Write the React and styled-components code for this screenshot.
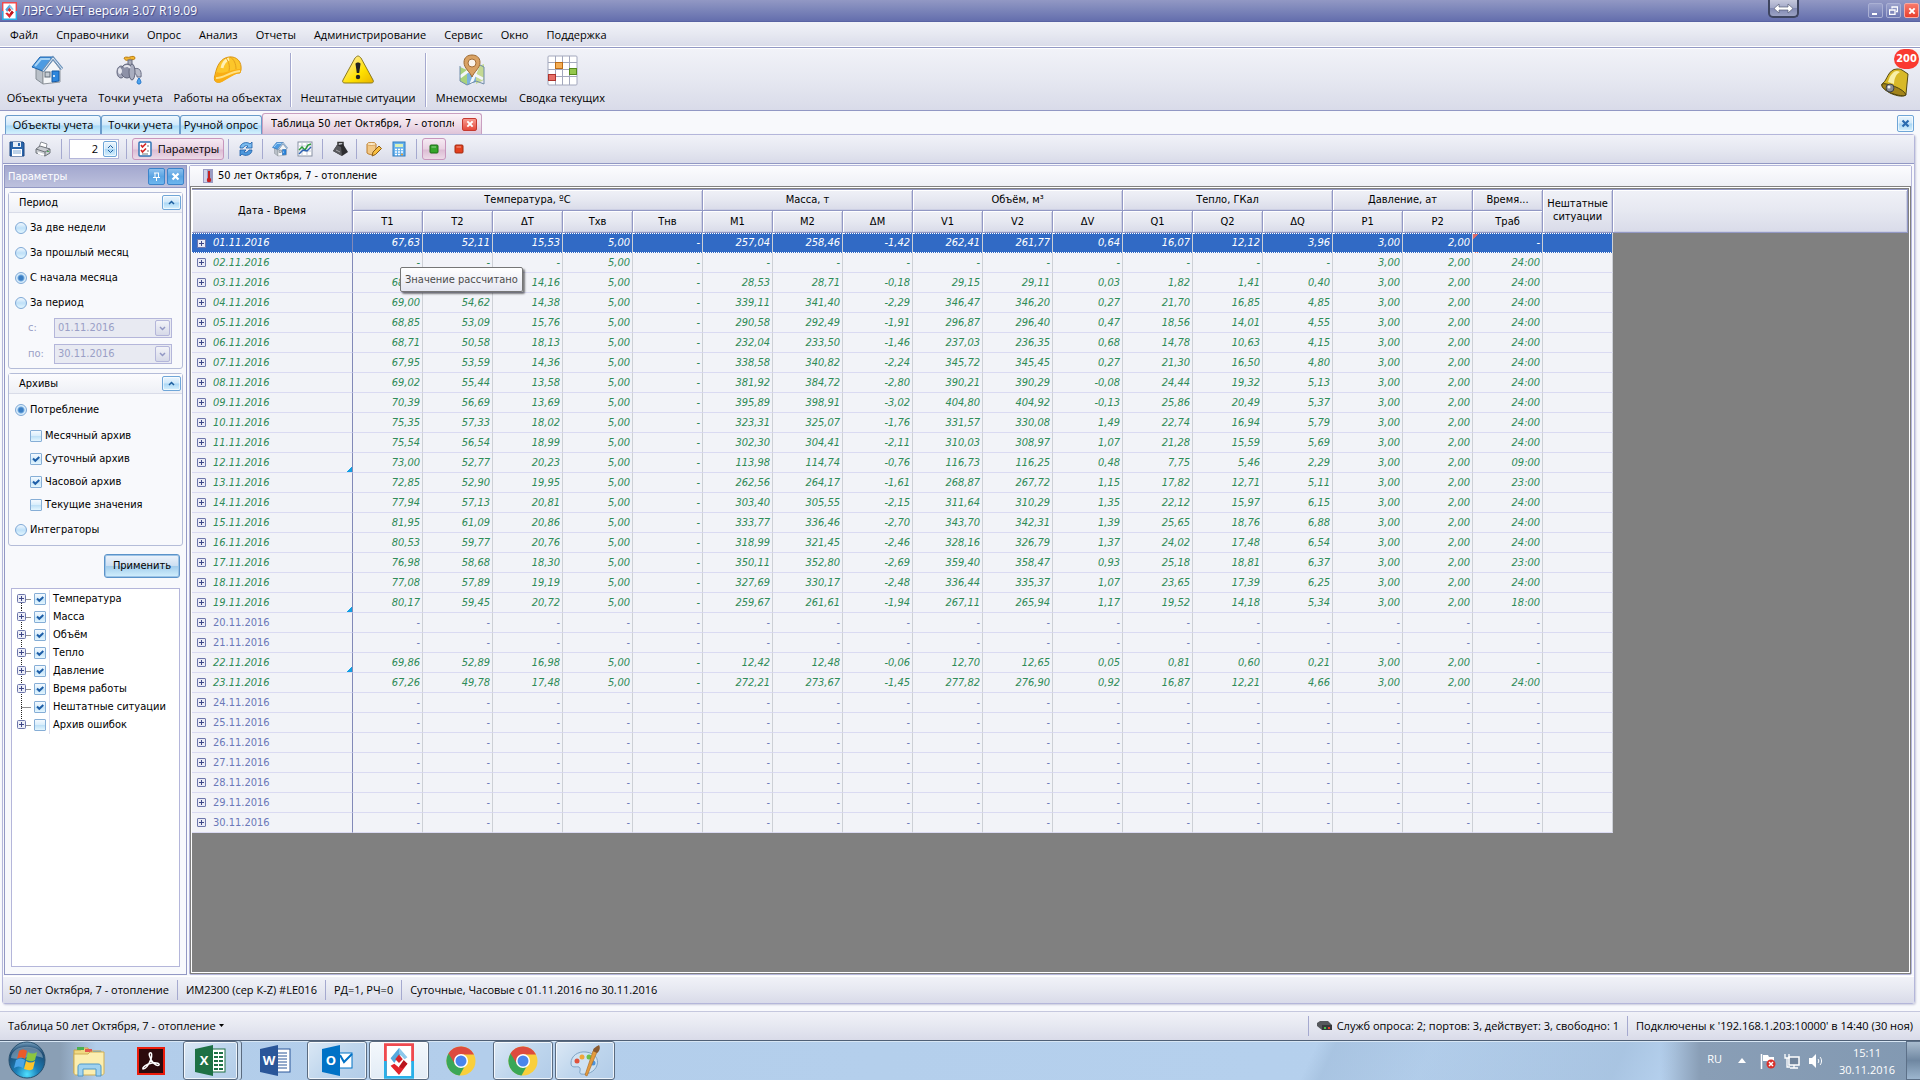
import React from "react";
import styled, { createGlobalStyle, css } from "styled-components";

const GlobalStyle = createGlobalStyle`
  * {
    box-sizing: border-box;
  }

  body {
    margin: 0;
    background: #f8f9fc;
    color: #000;
    font-family: "Open Sans", "Noto Sans", sans-serif;
    font-size: 11px;
    line-height: 16px;
  }

  button,
  input,
  select {
    font: inherit;
    color: inherit;
    margin: 0;
  }
`;

const smallFont = css`
  font-family: "DejaVu Sans Condensed", "Noto Sans", sans-serif;
  font-size: 11px;
  line-height: 14px;
`;

const barFill = css`
  background: linear-gradient(#f1f2f8, #e6e8f1 50%, #d9dbe9);
`;

const blueGlass = css`
  border: 1px solid #6fa6d8;
  border-radius: 2px;
  background: linear-gradient(#eaf5fd, #cfe8fa 48%, #a9d6f5 52%, #d8f1fd);
  box-shadow: inset 0 0 0 1px rgba(255, 255, 255, 0.6);
`;

const Window = styled.div`
  display: flex;
  flex-direction: column;
  min-height: 100vh;
`;

const TitleBar = styled.header`
  display: flex;
  align-items: center;
  height: 22px;
  padding: 0 1px 0 2px;
  gap: 5px;
  background: linear-gradient(#9298c4, #7f88bb 40%, #646ead);
  border-bottom: 1px solid #5963a3;
  color: #fff;
  text-shadow: 1px 1px 1px #3d4684;
`;

const Title = styled.h1`
  flex: 1;
  margin: 0;
  font-size: 12px;
  font-weight: 400;
`;

const ResizeButton = styled.button`
  width: 31px;
  height: 18px;
  align-self: flex-start;
  display: grid;
  place-items: center;
  margin-right: 64px;
  padding: 0;
  border: 2px solid #3e4560;
  border-top: none;
  border-radius: 0 0 5px 5px;
  background: linear-gradient(#c5c8dc, #a2a8c8 50%, #8189b2 50%, #9ba2c4);
`;

const CaptionButton = styled.button`
  width: 15px;
  height: 15px;
  display: grid;
  place-items: center;
  padding: 0;
  border: 1px solid ${(p) => (p.$red ? "#f7a9a2" : "#aab0d4")};
  border-radius: 2px;
  background: ${(p) =>
    p.$red
      ? "linear-gradient(#f8796b, #e8402f)"
      : "linear-gradient(#9ba2cb, #6f79b3)"};
`;

const CaptionButtons = styled.div`
  display: flex;
  gap: 3px;
`;

const MenuBar = styled.nav`
  display: flex;
  align-items: center;
  height: 26px;
  padding-left: 1px;
  ${barFill}
  border-bottom: 1px solid #9298c4;
  box-shadow: inset 0 -1px 0 #fff;
`;

const MenuItem = styled.button`
  padding: 0 9px;
  border: none;
  background: none;
`;

const MainToolbar = styled.div`
  display: flex;
  align-items: stretch;
  height: 63px;
  padding: 4px 10px 3px 2px;
  ${barFill}
  border-top: 1px solid #fff;
  border-bottom: 1px solid #9298c4;
`;

const BigButton = styled.button`
  display: flex;
  flex-direction: column;
  align-items: center;
  justify-content: space-between;
  width: ${(p) => p.$width}px;
  padding: 1px 0 1px;
  border: none;
  background: none;
  white-space: nowrap;
`;

const Separator = styled.span`
  width: 1px;
  margin: 0 4px;
  background: #a5a9cf;
  box-shadow: 1px 0 0 #fff;
`;

const Spacer = styled.span`
  flex: 1;
`;

const BellButton = styled.button`
  position: relative;
  width: 30px;
  height: 30px;
  margin-top: 14px;
  padding: 0;
  border: none;
  background: none;
`;

const Badge = styled.span`
  position: absolute;
  right: -9px;
  top: -18px;
  width: 25px;
  height: 20px;
  border-radius: 10px;
  background: #fa3a30;
  color: #fff;
  font-family: "DejaVu Sans Condensed", sans-serif;
  font-weight: 700;
  font-size: 11px;
  line-height: 20px;
  text-align: center;
`;

const TabStrip = styled.div`
  display: flex;
  align-items: flex-end;
  height: 23px;
  padding: 0 6px 0 5px;
`;

const Tab = styled.button`
  height: 19px;
  width: ${(p) => p.$width}px;
  padding: 0;
  border: 1px solid #6a9ccb;
  border-bottom: none;
  border-radius: 3px 3px 0 0;
  background: linear-gradient(#f0f8fe, #cfe8fa 50%, #a8d8f6 55%, #d5f2fd);
  white-space: nowrap;
  line-height: 16px;
`;

const ActiveTab = styled.div`
  display: flex;
  align-items: center;
  gap: 8px;
  width: 220px;
  height: 21px;
  padding: 0 4px 0 8px;
  border: 1px solid #c99fc0;
  border-bottom: none;
  border-radius: 3px 3px 0 0;
  background: linear-gradient(#faf3f8, #efdfea 50%, #dfc3d8);
`;

const ActiveTabLabel = styled.span`
  ${smallFont}
  flex: 1;
  overflow: hidden;
  white-space: nowrap;
`;

const CloseTab = styled.button`
  width: 15px;
  height: 13px;
  display: grid;
  place-items: center;
  padding: 0;
  border: 1px solid #c5392f;
  border-radius: 2px;
  background: linear-gradient(#f79a90, #e5493b);
`;

const GlassButton = styled.button`
  ${blueGlass}
  display: grid;
  place-items: center;
  width: ${(p) => p.$w || 17}px;
  height: ${(p) => p.$h || 17}px;
  padding: 0;
`;

const StripClose = styled(GlassButton)`
  margin-bottom: 2px;
`;

const PageFrame = styled.main`
  flex: 1;
  display: flex;
  flex-direction: column;
  margin: 0 5px 7px 2px;
  border: 1px solid #b4b6da;
  border-radius: 0 3px 3px 3px;
  box-shadow: 1px 1px 2px #c9cbdc;
`;

const ToolRow = styled.div`
  display: flex;
  align-items: center;
  height: 29px;
  padding: 0 5px;
  ${barFill}
  border-bottom: 1px solid #9298c4;
`;

const ToolButton = styled.button`
  display: flex;
  align-items: center;
  justify-content: center;
  gap: 5px;
  width: ${(p) => p.$width || 26}px;
  height: 22px;
  padding: 0;
  border: 1px solid ${(p) => (p.$on ? "#c796bd" : "transparent")};
  border-radius: 3px;
  background: ${(p) =>
    p.$on ? "linear-gradient(#f6eaf3, #e9d2e3 50%, #dcbcd4 55%, #ecdae7)" : "none"};
`;

const ToolSeparator = styled.span`
  width: 1px;
  height: 20px;
  margin: 0 ${(p) => p.$right || 5}px 0 ${(p) => p.$left || 4}px;
  background: #a5a9cf;
`;

const Spinner = styled.label`
  display: flex;
  align-items: center;
  width: 50px;
  height: 20px;
  padding: 1px;
  border: 1px solid #b4b6da;
  background: #fff;
`;

const SpinnerInput = styled.input`
  flex: 1;
  width: 10px;
  padding: 0 5px 0 0;
  border: none;
  outline: none;
  background: none;
  text-align: right;
`;

const Workspace = styled.div`
  flex: 1;
  display: flex;
  gap: 2px;
  padding: 1px 2px 1px 1px;
`;

const SidePanel = styled.aside`
  ${smallFont}
  display: flex;
  flex-direction: column;
  width: 183px;
  border: 1px solid #9298c4;
`;

const SideHeader = styled.div`
  display: flex;
  align-items: center;
  gap: 2px;
  height: 22px;
  padding: 0 2px 0 3px;
  background: linear-gradient(#a3a8cf, #bdc1dd);
  border-bottom: 1px solid #9298c4;
  color: #fff;
`;

const SideTitle = styled.h2`
  flex: 1;
  margin: 0;
  font-size: 11px;
  font-weight: 400;
`;

const HeaderButton = styled.button`
  width: 17px;
  height: 17px;
  display: grid;
  place-items: center;
  padding: 0;
  border: 1px solid #3c84ca;
  border-radius: 2px;
  background: linear-gradient(#8cc0ee, #5ba4e2 50%, #6db6ee);
`;

const SideBody = styled.div`
  flex: 1;
  display: flex;
  flex-direction: column;
  padding: 4px 3px 7px;
`;

const Group = styled.section`
  margin-bottom: 4px;
  border: 1px solid #b4bcd8;
  border-radius: 3px;
  background: #f8f9fc;
`;

const GroupHeader = styled.div`
  display: flex;
  align-items: center;
  justify-content: space-between;
  height: 20px;
  padding: 0 1px 0 10px;
  background: linear-gradient(#fcfcfe, #eef0f6);
  border-bottom: 1px solid #d9dce8;
`;

const GroupTitle = styled.h3`
  margin: 0;
  font-size: 11px;
  font-weight: 400;
`;

const Option = styled.label`
  display: flex;
  align-items: center;
  gap: 3px;
  height: ${(p) => p.$height || 25}px;
  padding-left: ${(p) => (p.$nested ? 21 : 6)}px;
  white-space: nowrap;
`;

const PeriodOptions = styled.div`
  padding: 2px 0 1px;
`;

const ArchiveOptions = styled.div`
  padding: 2px 0 1px;
`;

const Radio = styled.input.attrs({ type: "radio" })`
  appearance: none;
  width: 12px;
  height: 12px;
  border: 1px solid #7fa9d6;
  border-radius: 50%;
  background: linear-gradient(#f1f8fe, #bfe0f8 50%, #e2f6fe);

  &:checked {
    background: radial-gradient(#3c7fc4 0 2px, #72a9de 3px, #d9edfb 4px);
  }
`;

const checkMark =
  "url(\"data:image/svg+xml,%3Csvg xmlns='http://www.w3.org/2000/svg' width='10' height='10'%3E%3Cpath d='M2 4.5l2.3 2.3L8.3 3' fill='none' stroke='%231f5fa8' stroke-width='2'/%3E%3C/svg%3E\")";

const Checkbox = styled.input.attrs({ type: "checkbox" })`
  appearance: none;
  width: 12px;
  height: 12px;
  border: 1px solid #86aed6;
  border-radius: 1px;
  background: linear-gradient(#f4faff, #d8edfb 50%, #bfe1f7 55%, #e4f6fe);

  &:checked {
    background: ${checkMark} center no-repeat,
      linear-gradient(#f4faff, #d8edfb 50%, #c9e6f9 55%, #e4f6fe);
  }
`;

const DateRow = styled.label`
  display: grid;
  grid-template-columns: 26px 118px;
  align-items: center;
  padding: 2px 0 4px 19px;
  color: #9a9fc6;
`;

const DateBox = styled.span`
  display: flex;
  align-items: center;
  height: 20px;
  padding: 0 1px 0 3px;
  border: 1px solid #b4b6da;
  background: #e8eaf2;
`;

const DateSelect = styled.select`
  appearance: none;
  flex: 1;
  padding: 0;
  border: none;
  background: none;
  opacity: 1;
`;

const DateArrow = styled.span`
  display: grid;
  place-items: center;
  width: 15px;
  height: 16px;
  border: 1px solid #b4b6da;
  border-radius: 2px;
  background: linear-gradient(#f2f3f8, #d6d9e8);
`;

const ApplyButton = styled.button`
  align-self: flex-end;
  width: 76px;
  height: 24px;
  margin: 4px 3px 10px 0;
  border: 1px solid #5b93c9;
  border-radius: 3px;
  background: linear-gradient(#eef4fb, #cddff2 48%, #a3cdec 52%, #d3f0fd);
  box-shadow: inset 0 0 0 1px #9cc3e6;
`;

const Tree = styled.ul`
  flex: 1;
  margin: 0 3px;
  padding: 1px 0;
  list-style: none;
  border: 1px solid #b4b6da;
  background: #fff;
`;

const TreeItem = styled.li`
  display: flex;
  align-items: center;
  height: 18px;
  padding-left: 4px;
`;

const TreeLines = styled.svg`
  width: 17px;
  height: 18px;
`;

const TreeLabel = styled.label`
  display: flex;
  align-items: center;
  height: 18px;
  padding-left: 1px;
  white-space: nowrap;

  span {
    margin-left: 3px;
    padding-left: 3px;
    border-left: 1px solid #dcdff0;
    line-height: 18px;
  }
`;

const MainPanel = styled.section`
  ${smallFont}
  flex: 1;
  min-width: 0;
  display: flex;
  flex-direction: column;
  border: 1px solid #b4b6da;
  border-radius: 2px;
`;

const PanelCaption = styled.div`
  display: flex;
  align-items: center;
  gap: 5px;
  height: 20px;
  padding: 0 0 1px 13px;
  background: linear-gradient(#fcfcfe, #eef0f6);
`;

const GridBox = styled.div`
  position: relative;
  flex: 1;
  display: flex;
  align-items: flex-start;
  padding: 2px 2px 0 1px;
  border: 1px solid #808080;
  background: #808080;
  box-shadow: inset 0 0 0 1px #fff;
`;

const headerCell = css`
  border: solid #9298c4;
  border-width: 0 1px 1px 0;
  background: linear-gradient(#f0f1f7, #e6e8f1 50%, #d9dbe9);
  box-shadow: inset 1px 1px 0 #fff, inset -1px -1px 0 #cbcee3;
`;

const DataTable = styled.table`
  flex: none;
  width: 1421px;
  table-layout: fixed;
  border-collapse: separate;
  border-spacing: 0;
  border-top: 1px solid #9298c4;
`;

const HeadCell = styled.th`
  ${headerCell}
  height: ${(p) => (p.rowSpan ? 43 : p.$upper ? 21 : 22)}px;
  padding: 0 0 ${(p) => (p.rowSpan || p.$upper ? 2 : 0)}px;
  font-weight: 400;
  line-height: 13px;
`;

const HeaderFiller = styled.div`
  ${headerCell}
  flex: 1;
  height: 44px;
  border-top: 1px solid #9298c4;
`;

const cellColor = { saved: "#2e8b57", empty: "#6a78b8" };

const Row = styled.tr`
  font-style: ${(p) => (p.$kind === "saved" ? "italic" : "normal")};
  color: ${(p) => cellColor[p.$kind]};
  background: #f2f3f8;

  ${(p) =>
    p.$selected &&
    css`
      color: #fff;
      background: #316ac5;
    `}
`;

const Cell = styled.td`
  height: 20px;
  padding: 0 2px 0 0;
  border: solid #cdd0d6;
  border-width: 0 1px 1px 0;
  border-bottom-color: #dadaf2;
  text-align: right;
  line-height: 16px;

  ${(p) =>
    p.$selected &&
    css`
      border-top: 1px dotted #fff;
      border-bottom: 1px dotted #fff;
    `}
  ${(p) =>
    p.$warn &&
    css`
      background: linear-gradient(135deg, #d96b6b 4px, transparent 4px);
    `}
`;

const DateCell = styled(Cell)`
  padding: 0 0 0 5px;
  border-right-color: #8289b8;
  text-align: left;
  background: ${(p) =>
    p.$marked ? "linear-gradient(315deg, #129fe3 4px, transparent 4px)" : "none"};
`;

const DateCellInner = styled.div`
  display: flex;
  align-items: center;
  gap: 7px;
`;

const Expander = styled.button`
  width: 9px;
  height: 9px;
  padding: 0;
  border: 1px solid #6d76ab;
  border-radius: 1px;
  background: linear-gradient(#3d4687, #3d4687) center / 5px 1px no-repeat,
    linear-gradient(#3d4687, #3d4687) center / 1px 5px no-repeat, #e9ebf5;
`;

const Tooltip = styled.div`
  position: absolute;
  left: 209px;
  top: 80px;
  padding: 5px 4px 4px;
  border: 1px solid #767676;
  border-radius: 2px;
  background: linear-gradient(#fff, #e4e5f0);
  box-shadow: 2px 2px 2px rgba(0, 0, 0, 0.5);
  color: #4c4c4c;
`;

const StatusBar = styled.footer`
  display: flex;
  align-items: center;
  height: 27px;
  padding: 0 6px;
  ${barFill}
  border-top: 1px solid #fff;
`;

const WindowStatus = styled(StatusBar)`
  height: 29px;
  padding: 0 7px 1px 8px;
  border-top: 1px solid #c5c8de;
`;

const StatusDivider = styled.span`
  width: 1px;
  height: 20px;
  margin: 0 8px;
  background: #a5a9cf;
`;

const StatusText = styled.span`
  display: flex;
  align-items: center;
  gap: 5px;
  white-space: nowrap;
`;

const WindowMenu = styled.button`
  display: flex;
  align-items: center;
  gap: 3px;
  padding: 0;
  border: none;
  background: none;
`;

const Taskbar = styled.footer`
  display: flex;
  height: 40px;
  border-top: 1px solid #4f6076;
  background: linear-gradient(
      115deg,
      transparent 68%,
      rgba(160, 188, 218, 0.6) 69%,
      rgba(160, 188, 218, 0.2) 74%,
      rgba(160, 188, 218, 0.6) 84%,
      transparent 87%
    ),
    linear-gradient(
      90deg,
      #8a9fb5 0,
      #8a9fb5 60px,
      #b2cdea 96px,
      #b6d1ee calc(100% - 260px),
      #899eb6 calc(100% - 220px),
      #8299b2 100%
    );
  box-shadow: inset 0 1px 0 #d7e6f4;
`;

const StartButton = styled.button`
  width: 58px;
  padding: 0 6px 0 2px;
  border: none;
  background: none;
`;

const TaskButton = styled.button`
  display: grid;
  place-items: center;
  width: 60px;
  margin: 0 1px;
  padding: 0;
  border: 1px solid transparent;
  border-radius: 3px;
  background: none;

  ${(p) =>
    p.$open &&
    css`
      border-color: #5a6b80;
      box-shadow: inset 0 0 0 1px rgba(255, 255, 255, 0.75);
      background: linear-gradient(135deg, #dbe8f5, #bfd6ed 50%, #b2cce8);
    `}
  ${(p) =>
    p.$active &&
    css`
      background: linear-gradient(#f4f8fc, #e2ecf6);
    `}
  ${(p) =>
    p.$stacked &&
    css`
      width: 55px;
      margin-right: 6px;
      box-shadow: inset 0 0 0 1px rgba(255, 255, 255, 0.75), 3px 0 0 #c6d9ec,
        4px 0 0 #5a6b80;
    `}
`;

const Tray = styled.div`
  display: flex;
  align-items: center;
  color: #fff;
`;

const TrayIcons = styled.div`
  display: flex;
  align-items: center;
  gap: 8px;
  padding-right: 4px;
`;

const Clock = styled.time`
  width: 78px;
  text-align: center;
  line-height: 17px;
`;

const Language = styled.span`
  margin: 0 16px 4px 0;
`;

const ShowDesktop = styled.button`
  width: 14px;
  align-self: stretch;
  border: 1px solid #5c7088;
  border-right: none;
  background: linear-gradient(#a9bccf, #6f87a1 50%, #9db6cf);
`;

/* ---------- icons ---------- */

function Svg({ size = 16, w, h, children }) {
  return (
    <svg width={w || size} height={h || size} viewBox={`0 0 ${w || size} ${h || size}`} aria-hidden="true">
      {children}
    </svg>
  );
}

function LersIcon({ size = 16 }) {
  return (
    <svg width={size} height={size * 1.2} viewBox="0 0 32 38" aria-hidden="true">
      <rect x="1" y="1" width="30" height="36" fill="#fff" />
      <path d="M1.500 37V1.500H30.500V20" fill="none" stroke="#ef4a4f" strokeWidth="3" />
      <path d="M1.500 19V36.500H30.500V19" fill="none" stroke="#2ab0e8" strokeWidth="3" />
      <path d="M7 16L16 5L22 12L16 13L11 21Z" fill="#56a9de" />
      <path d="M16 5L25 15L22 17L16 11Z" fill="#8ec9ec" />
      <path d="M16 12L20 17L16 21L12 17Z" fill="#d8232a" />
      <path d="M25 22L16 34L7 24L11 22L16 26L21 19Z" fill="#e2242c" />
      <path d="M21 18L25 22L20 27L16 25Z" fill="#b9151d" />
    </svg>
  );
}

function HouseIcon({ size = 32 }) {
  return (
    <svg width={size} height={size} viewBox="0 0 32 32" aria-hidden="true">
      <path d="M5 14L12 18V30L5 25Z" fill="#b9c0c8" stroke="#858c94" />
      <path d="M12 18L22 6L29 15V28L12 30Z" fill="#f4f6f8" stroke="#8e949b" />
      <path d="M1 13L9 3L22 3L12 17Z" fill="#4c9be2" stroke="#1c63ad" />
      <path d="M4 12L10 5H19" fill="none" stroke="#a6d2f5" strokeWidth="2" />
      <path d="M12 17L22 4L31 15" fill="none" stroke="#6c93bb" strokeWidth="3" />
      <path d="M12 17L22 4L31 15" fill="none" stroke="#e6eef6" />
      <rect x="14" y="18" width="5" height="5" fill="#c5ccd3" stroke="#5f6b77" />
      <path d="M21 17H28V27L21 28Z" fill="#2d86dd" stroke="#1559a3" />
      <circle cx="23" cy="22" r="1" fill="#fff" />
    </svg>
  );
}

function TapIcon() {
  return (
    <Svg size={32}>
      <path d="M9 4C11 2 13 4 15 3C17 2 20 2 20 4C20 6 17 6 15 5C13 7 10 7 9 4Z" fill="#f2b632" stroke="#bb7d12" />
      <rect x="13" y="6" width="4" height="6" fill="#a9acba" stroke="#6c7086" />
      <path d="M18 15C24 13 27 16 26 23H22C22 20 20 19 17 20Z" fill="#b8bac8" stroke="#6c7086" />
      <ellipse cx="6" cy="18" rx="4" ry="6" fill="#a4a8bb" stroke="#62667c" />
      <ellipse cx="12" cy="17" rx="6" ry="7" fill="#8d91a7" stroke="#62667c" />
      <ellipse cx="17" cy="18" rx="3" ry="8" fill="#a9adbf" stroke="#62667c" />
      <ellipse cx="5" cy="17" rx="2" ry="3" fill="#e5e6ee" />
      <path d="M9 13C12 11 14 12 15 14" fill="none" stroke="#e4e5ed" strokeWidth="2" />
      <path d="M24 24C27 28 26 30 24 30C22 30 21 28 24 24Z" fill="#4da4ef" stroke="#1b6fc6" />
    </Svg>
  );
}

function HelmetIcon() {
  return (
    <Svg size={32}>
      <path d="M3 21C5 11 9 4 17 3C25 2 30 8 29 16L28 19C20 19 15 25 8 28C4 29 1 27 3 21Z" fill="#fcc62a" stroke="#dc9512" />
      <path d="M5 18C11 21 20 15 28 15L29 18C23 20 17 24 10 28C5 30 1 27 3 22Z" fill="#f9ae14" />
      <path d="M4 24C11 25 17 18 28 17" fill="none" stroke="#ffe286" strokeWidth="2" />
      <path d="M10 14C11 9 14 6 17 5" fill="none" stroke="#fff0b4" strokeWidth="3" />
      <path d="M18 3C22 5 24 10 24 15M14 4C17 8 18 12 17 17" fill="none" stroke="#e3a01c" />
    </Svg>
  );
}

function WarningIcon() {
  return (
    <Svg size={32}>
      <defs>
        <linearGradient id="warn" x2="1" y2="1">
          <stop offset="0.200" stopColor="#ffe98a" />
          <stop offset="0.600" stopColor="#ffe100" />
          <stop offset="1" stopColor="#e9b400" />
        </linearGradient>
      </defs>
      <path d="M16 2C17 2 18 3 19 4L31 26C32 28 31 29 29 29H3C1 29 0 28 1 26L13 4C14 3 15 2 16 2Z" fill="url(#warn)" stroke="#8c7a1d" />
      <path d="M13.500 10C13.500 8 18.500 8 18.500 10L17.200 19H14.800Z" fill="#222" />
      <circle cx="16" cy="23" r="2.200" fill="#222" />
    </Svg>
  );
}

function MapIcon() {
  return (
    <Svg size={32}>
      <path d="M4 13L11 16V31L4 27Z" fill="#a9d27c" />
      <path d="M11 16L20 13V28L11 31Z" fill="#7db3dd" />
      <path d="M20 13L28 10V26L20 30Z" fill="#c4d993" />
      <path d="M4 23L12 17L27 25M22 12L15 30" fill="none" stroke="#f3f6fa" strokeWidth="3" />
      <path d="M4 12V27L11 31L20 27L28 30V13L24 11" fill="none" stroke="#718ca8" />
      <path d="M16 23C14 18 8 14 8 8.500C8 3 12 1 16 1C20 1 24 3 24 8.500C24 14 18 18 16 23Z" fill="#d9a264" stroke="#9c6932" />
      <circle cx="16" cy="9" r="4" fill="#faf4ec" stroke="#a36e37" />
    </Svg>
  );
}

function SummaryIcon() {
  return (
    <Svg size={32}>
      <rect x="2" y="2" width="29" height="29" rx="1" fill="#fff" stroke="#a3a8bd" />
      <path d="M2 8.500H31M2 15.500H31M2 22.500H31M9.500 2V31M16.500 2V31M23.500 2V31" stroke="#a3a8bd" />
      <rect x="9.500" y="8.500" width="7" height="6" fill="#f4ad54" stroke="#bc6c16" />
      <rect x="23.500" y="14.500" width="7" height="6" fill="#94c74c" stroke="#568b1d" />
      <rect x="2.500" y="20.500" width="7" height="6" fill="#e66f68" stroke="#ad332d" />
    </Svg>
  );
}

function BellIcon() {
  return (
    <Svg size={30}>
      <path d="M22 3L28 7L26 27C26 30 18 30 10 26C3 22 0 18 3 16C7 14 8 2 17 2C19 2 20 2 22 3Z" fill="#d8b928" stroke="#574b12" />
      <path d="M2 17C5 15 25 22 26 28C22 31 0 24 2 17Z" fill="#a3841a" stroke="#4d420f" />
      <path d="M12 7C9 10 9 13 8 15L14 17C14 12 16 7 20 5C17 3 14 4 12 7Z" fill="#f8f0a8" />
      <circle cx="10" cy="21" r="4" fill="#8a8e94" stroke="#3f4247" />
      <circle cx="9" cy="20" r="1.500" fill="#f3f3f3" />
    </Svg>
  );
}

function Cross({ color = "#fff", size = 9 }) {
  return (
    <svg width={size} height={size} viewBox="0 0 9 9" aria-hidden="true">
      <path d="M1.500 1.500L7.500 7.500M7.500 1.500L1.500 7.500" stroke={color} strokeWidth="2.200" />
    </svg>
  );
}

const SaveIcon = () => (
  <Svg>
    <path d="M1 1H14L15 2V15H1Z" fill="#2a66ab" stroke="#1a4580" />
    <rect x="4" y="1" width="8" height="5" fill="#e8f0f8" />
    <rect x="9" y="2" width="2" height="3" fill="#2a66ab" />
    <rect x="3" y="8" width="10" height="7" fill="#fff" />
    <path d="M4 10H12M4 12H12" stroke="#7aa5d2" />
  </Svg>
);

const PrinterIcon = () => (
  <Svg>
    <path d="M4 6L6 1L12 3L11 8Z" fill="#fff" stroke="#8b8f96" />
    <path d="M1 8L5 5L15 8V12L10 15L1 12Z" fill="#c9ccd1" stroke="#6f747b" />
    <path d="M1 8L10 11V15M10 11L15 8" fill="none" stroke="#6f747b" />
    <path d="M3 12L9 14" stroke="#fff" strokeWidth="2" />
    <rect x="12" y="10" width="2" height="1" fill="#4bb052" />
  </Svg>
);

const ListIcon = () => (
  <Svg>
    <rect x="2" y="1" width="12" height="14" rx="1" fill="#fff" stroke="#3274b5" strokeWidth="1.500" />
    <path d="M4 4L5.500 6L9 2.500M4 9L5.500 11L9 7.500" fill="none" stroke="#d42626" strokeWidth="1.700" />
    <path d="M10 5H12M10 10H12M5 13H11" stroke="#777" />
  </Svg>
);

const RefreshIcon = () => (
  <Svg>
    <path d="M2 7C2 2 9 0 12 3L14 1V7H8L10 5C8 4 6 5 5 7Z" fill="#7bbcf0" stroke="#1c5ea8" strokeWidth="0.800" />
    <path d="M14 9C14 14 7 16 4 13L2 15V9H8L6 11C8 12 10 11 11 9Z" fill="#4d98dc" stroke="#1c5ea8" strokeWidth="0.800" />
  </Svg>
);

const ChartIcon = () => (
  <Svg>
    <rect x="1" y="1" width="14" height="14" fill="#fff" stroke="#8791a3" />
    <path d="M1 5H15M1 10H15M5 1V15M10 1V15" stroke="#c5cbd8" />
    <path d="M2 9L5 6L8 9L11 4L14 3" fill="none" stroke="#2c9a3a" strokeWidth="1.500" />
    <path d="M2 13L6 9L10 10L14 6" fill="none" stroke="#2d62b3" strokeWidth="1.500" />
  </Svg>
);

const WeightIcon = () => (
  <Svg>
    <path d="M6 5V1.500H11V5" fill="none" stroke="#333" strokeWidth="1.500" />
    <path d="M5 4L11 3L16 11L10 15L1 10Z" fill="#2d2d30" />
    <path d="M5 4L9 6L10 15L1 10Z" fill="#58595d" />
    <path d="M4 9L8 11" stroke="#a7a7aa" />
  </Svg>
);

const EditIcon = () => (
  <Svg>
    <path d="M1 3C3 1 8 1 10 3V12C8 14 3 14 1 12Z" fill="#f2c886" stroke="#bd7d2b" />
    <ellipse cx="5.500" cy="3" rx="4.500" ry="1.500" fill="#fdebc8" stroke="#bd7d2b" strokeWidth="0.600" />
    <path d="M6 15L7 11L13 5L15.500 7.500L9.500 13.500Z" fill="#f8be3f" stroke="#8b5c15" />
  </Svg>
);

const CalcIcon = () => (
  <Svg>
    <rect x="2" y="1" width="12" height="14" fill="#68b2ec" stroke="#2f7cc2" />
    <rect x="4" y="3" width="8" height="3" fill="#d8f0b8" />
    <path d="M4 8.500H6M7 8.500H9M10 8.500H12M4 11H6M7 11H9M10 11H12M4 13.500H6M7 13.500H9" stroke="#fff" strokeWidth="1.500" />
    <path d="M10 13.500H12" stroke="#f5a334" strokeWidth="1.500" />
  </Svg>
);

const Square = ({ fill, edge }) => (
  <Svg size={10}>
    <rect x="1" y="1" width="8" height="8" rx="1" fill={fill} stroke={edge} />
    <path d="M2.500 3H7" stroke="#fff" strokeOpacity="0.500" />
  </Svg>
);

const ThermoIcon = () => (
  <Svg w={10} h={14}>
    <rect width="10" height="14" fill="#9a9cc4" />
    <rect x="1" y="1" width="3" height="12" fill="#cfd1e8" />
    <path d="M6 2V9" stroke="#c62121" strokeWidth="2" />
    <circle cx="6" cy="11" r="2.200" fill="#c62121" />
  </Svg>
);

const Chevron = ({ up, color = "#1d5f9f" }) => (
  <Svg w={7} h={5}>
    <path d={up ? "M1 4L3.500 1.500L6 4" : "M1 1L3.500 3.500L6 1"} fill="none" stroke={color} strokeWidth="1.500" />
  </Svg>
);

const StartOrb = () => (
  <svg width="38" height="38" viewBox="0 0 38 38" aria-hidden="true">
    <defs>
      <radialGradient id="orb" cx="0.500" cy="0.900" r="0.900">
        <stop offset="0" stopColor="#4fe0ff" />
        <stop offset="0.350" stopColor="#1b7fb8" />
        <stop offset="0.800" stopColor="#1d4b73" />
        <stop offset="1" stopColor="#7ba4c2" />
      </radialGradient>
    </defs>
    <circle cx="19" cy="19" r="18" fill="url(#orb)" stroke="#27506f" />
    <path d="M3 17C4 2 34 2 35 17C24 12 14 20 3 17Z" fill="#fff" fillOpacity="0.300" />
    <path d="M11 10C14 8 16 8 19 10L17 18C14 16 12 16 9 18Z" fill="#ea5a2a" />
    <path d="M20 11C23 13 26 13 29 11L27 19C24 21 21 20 18 19Z" fill="#8cc63f" />
    <path d="M8 19C11 17 14 17 17 19L15 27C12 25 9 25 6 27Z" fill="#4aa5e8" />
    <path d="M18 20C21 22 24 22 27 20L25 28C22 30 19 29 16 28Z" fill="#fcc42c" />
  </svg>
);

const ExplorerIcon = () => (
  <Svg size={32}>
    <path d="M1 5H8L9 3H15L16 6H28V28H1Z" fill="#f0d981" stroke="#c7a548" />
    <rect x="4" y="2" width="7" height="3" fill="#4caf50" />
    <rect x="12" y="4" width="7" height="3" fill="#e2574c" />
    <rect x="20" y="6" width="8" height="3" fill="#5aa8e6" />
    <path d="M1 9H15L17 7H31V28C31 29 30 30 29 30H3C2 30 1 29 1 28Z" fill="#fbeeb0" stroke="#cfae55" />
    <path d="M5 31V22C5 20 6 19 8 19H25C27 19 28 20 28 22V31H23V24H10V31Z" fill="#9fd2f0" stroke="#4e98c8" />
  </Svg>
);

const AcrobatIcon = () => (
  <Svg size={28}>
    <rect x="1" y="1" width="26" height="26" fill="#2c0a0c" stroke="#ec1c0b" strokeWidth="2" />
    <path d="M13 6C15 5 15 9 14 12C12 17 9 22 6 22C5 20 10 17 15 16C20 15 23 17 22 18C20 20 14 15 13 10C12 8 12 6 13 6Z" fill="none" stroke="#fff" strokeWidth="1.500" />
  </Svg>
);

function OfficeIcon({ color, letter, children }) {
  return (
    <Svg w={31} h={31}>
      {children}
      <path d="M0 4L18 0V31L0 27Z" fill={color} />
      <text x="9" y="20" fill="#fff" fontFamily="Open Sans, sans-serif" fontWeight="700" fontSize="13" textAnchor="middle">
        {letter}
      </text>
    </Svg>
  );
}

const ChromeIcon = () => (
  <Svg size={30}>
    <circle cx="15" cy="15" r="14.500" fill="#f9cf3c" />
    <path d="M15 15L2.500 7.500A14.500 14.500 0 0 1 28 8.500H15Z" fill="#dd4b3e" />
    <path d="M15 15L2.500 7.500A14.500 14.500 0 0 0 13.500 29.500L20 18Z" fill="#3aa757" />
    <path d="M2.500 7.500L9 18L15 8.500Z" fill="#dd4b3e" />
    <circle cx="15" cy="15" r="7" fill="#fff" />
    <circle cx="15" cy="15" r="5.500" fill="#4a85ec" />
  </Svg>
);

const PaintIcon = () => (
  <Svg size={32}>
    <path d="M2 18C2 11 9 6 17 7C26 8 30 14 28 20C26 27 18 30 12 29C9 28 13 24 10 22C7 21 2 24 2 18Z" fill="#cfe2f2" stroke="#7ea3c4" />
    <circle cx="8" cy="16" r="2.500" fill="#e0523b" />
    <circle cx="13" cy="12" r="2.500" fill="#f0a73a" />
    <circle cx="20" cy="12" r="2.500" fill="#6cc04a" />
    <circle cx="24" cy="18" r="2.500" fill="#4c94dc" />
    <path d="M28 7L18 31L16 30L24 6Z" fill="#e39b3d" stroke="#a76720" strokeWidth="0.600" />
    <path d="M24 6C24 3 27 2 30 0C32 3 30 7 28 8Z" fill="#8a5a2e" />
  </Svg>
);

/* ---------- data ---------- */

const menu = ["Файл", "Справочники", "Опрос", "Анализ", "Отчеты", "Администрирование", "Сервис", "Окно", "Поддержка"];

const groups = [
  ["Температура, ºC", ["T1", "T2", "ΔT", "Tхв", "Tнв"]],
  ["Масса, т", ["M1", "M2", "ΔM"]],
  ["Объём, м³", ["V1", "V2", "ΔV"]],
  ["Тепло, ГКал", ["Q1", "Q2", "ΔQ"]],
  ["Давление, ат", ["P1", "P2"]],
  ["Время...", ["Tраб"]],
];

const readings = [
  "67,63 52,11 15,53 5,00 - 257,04 258,46 -1,42 262,41 261,77 0,64 16,07 12,12 3,96 3,00 2,00 -",
  "- - - 5,00 - - - - - - - - - - 3,00 2,00 24:00",
  "68,85 54,69 14,16 5,00 - 28,53 28,71 -0,18 29,15 29,11 0,03 1,82 1,41 0,40 3,00 2,00 24:00",
  "69,00 54,62 14,38 5,00 - 339,11 341,40 -2,29 346,47 346,20 0,27 21,70 16,85 4,85 3,00 2,00 24:00",
  "68,85 53,09 15,76 5,00 - 290,58 292,49 -1,91 296,87 296,40 0,47 18,56 14,01 4,55 3,00 2,00 24:00",
  "68,71 50,58 18,13 5,00 - 232,04 233,50 -1,46 237,03 236,35 0,68 14,78 10,63 4,15 3,00 2,00 24:00",
  "67,95 53,59 14,36 5,00 - 338,58 340,82 -2,24 345,72 345,45 0,27 21,30 16,50 4,80 3,00 2,00 24:00",
  "69,02 55,44 13,58 5,00 - 381,92 384,72 -2,80 390,21 390,29 -0,08 24,44 19,32 5,13 3,00 2,00 24:00",
  "70,39 56,69 13,69 5,00 - 395,89 398,91 -3,02 404,80 404,92 -0,13 25,86 20,49 5,37 3,00 2,00 24:00",
  "75,35 57,33 18,02 5,00 - 323,31 325,07 -1,76 331,57 330,08 1,49 22,74 16,94 5,79 3,00 2,00 24:00",
  "75,54 56,54 18,99 5,00 - 302,30 304,41 -2,11 310,03 308,97 1,07 21,28 15,59 5,69 3,00 2,00 24:00",
  "73,00 52,77 20,23 5,00 - 113,98 114,74 -0,76 116,73 116,25 0,48 7,75 5,46 2,29 3,00 2,00 09:00",
  "72,85 52,90 19,95 5,00 - 262,56 264,17 -1,61 268,87 267,72 1,15 17,82 12,71 5,11 3,00 2,00 23:00",
  "77,94 57,13 20,81 5,00 - 303,40 305,55 -2,15 311,64 310,29 1,35 22,12 15,97 6,15 3,00 2,00 24:00",
  "81,95 61,09 20,86 5,00 - 333,77 336,46 -2,70 343,70 342,31 1,39 25,65 18,76 6,88 3,00 2,00 24:00",
  "80,53 59,77 20,76 5,00 - 318,99 321,45 -2,46 328,16 326,79 1,37 24,02 17,48 6,54 3,00 2,00 24:00",
  "76,98 58,68 18,30 5,00 - 350,11 352,80 -2,69 359,40 358,47 0,93 25,18 18,81 6,37 3,00 2,00 23:00",
  "77,08 57,89 19,19 5,00 - 327,69 330,17 -2,48 336,44 335,37 1,07 23,65 17,39 6,25 3,00 2,00 24:00",
  "80,17 59,45 20,72 5,00 - 259,67 261,61 -1,94 267,11 265,94 1,17 19,52 14,18 5,34 3,00 2,00 18:00",
  "",
  "",
  "69,86 52,89 16,98 5,00 - 12,42 12,48 -0,06 12,70 12,65 0,05 0,81 0,60 0,21 3,00 2,00 -",
  "67,26 49,78 17,48 5,00 - 272,21 273,67 -1,45 277,82 276,90 0,92 16,87 12,21 4,66 3,00 2,00 24:00",
];

const markedDays = [12, 19, 22];

const rows = Array.from({ length: 30 }, (_, i) => {
  const line = readings[i];
  return {
    day: i + 1,
    date: `${String(i + 1).padStart(2, "0")}.11.2016`,
    kind: line ? "saved" : "empty",
    values: line ? line.split(" ") : Array(17).fill("-"),
  };
});

const treeItems = [
  ["Температура", true],
  ["Масса", true],
  ["Объём", true],
  ["Тепло", true],
  ["Давление", true],
  ["Время работы", true],
  ["Нештатные ситуации", true],
  ["Архив ошибок", false],
];

/* ---------- parts ---------- */

function DateField({ label, value }) {
  return (
    <DateRow>
      {label}
      <DateBox>
        <DateSelect disabled defaultValue={value}>
          <option>{value}</option>
        </DateSelect>
        <DateArrow>
          <Chevron color="#9298c4" />
        </DateArrow>
      </DateBox>
    </DateRow>
  );
}

function GroupBox({ title, children }) {
  return (
    <Group>
      <GroupHeader>
        <GroupTitle>{title}</GroupTitle>
        <GlassButton $w={19} $h={15} aria-label={`Свернуть: ${title}`}>
          <Chevron up />
        </GlassButton>
      </GroupHeader>
      {children}
    </Group>
  );
}

function ParameterTree() {
  return (
    <Tree>
      {treeItems.map(([name, checked], i) => {
        const leaf = name === "Нештатные ситуации";
        return (
          <TreeItem key={name}>
            <TreeLines viewBox="0 0 17 18" aria-hidden="true">
              <path
                d={`M5.500 ${i === 0 ? 9 : 0}V${i === treeItems.length - 1 ? 9 : 18}M5.500 9.500H15`}
                fill="none"
                stroke="#222"
                strokeDasharray="1 1"
              />
              {!leaf && (
                <g>
                  <rect x="1.500" y="4.500" width="8" height="8" rx="1" fill="#eceef7" stroke="#6d76ab" />
                  <path d="M3 8.500H8M5.500 6V11" stroke="#3d4687" />
                </g>
              )}
            </TreeLines>
            <TreeLabel>
              <Checkbox defaultChecked={checked} />
              <span>{name}</span>
            </TreeLabel>
          </TreeItem>
        );
      })}
    </Tree>
  );
}

function Parameters() {
  return (
    <SidePanel>
      <SideHeader>
        <SideTitle>Параметры</SideTitle>
        <HeaderButton aria-label="Закрепить">
          <Svg size={9}>
            <path d="M2 1H7M3 1V5M6.500 1V5M1 5.500H8M4.500 6V9" stroke="#fff" />
          </Svg>
        </HeaderButton>
        <HeaderButton aria-label="Закрыть">
          <Cross />
        </HeaderButton>
      </SideHeader>
      <SideBody>
        <GroupBox title="Период">
          <PeriodOptions>
            {["За две недели", "За прошлый месяц", "С начала месяца", "За период"].map((text, i) => (
              <Option key={text}>
                <Radio name="period" defaultChecked={i === 2} />
                {text}
              </Option>
            ))}
          </PeriodOptions>
          <DateField label="с:" value="01.11.2016" />
          <DateField label="по:" value="30.11.2016" />
        </GroupBox>
        <GroupBox title="Архивы">
          <ArchiveOptions>
            <Option $height={28}>
              <Radio name="archive" defaultChecked />
              Потребление
            </Option>
            {["Месячный архив", "Суточный архив", "Часовой архив", "Текущие значения"].map((text, i) => (
              <Option key={text} $nested $height={23}>
                <Checkbox defaultChecked={i === 1 || i === 2} />
                {text}
              </Option>
            ))}
            <Option $height={28}>
              <Radio name="archive" />
              Интеграторы
            </Option>
          </ArchiveOptions>
        </GroupBox>
        <ApplyButton>Применить</ApplyButton>
        <ParameterTree />
      </SideBody>
    </SidePanel>
  );
}

function ReadingsTable() {
  return (
    <DataTable>
      <colgroup>
        <col style={{ width: 161 }} />
        {Array.from({ length: 18 }, (_, i) => (
          <col key={i} style={{ width: 70 }} />
        ))}
      </colgroup>
      <thead>
        <tr>
          <HeadCell rowSpan={2}>Дата - Время</HeadCell>
          {groups.map(([name, cols]) => (
            <HeadCell key={name} colSpan={cols.length} $upper>
              {name}
            </HeadCell>
          ))}
          <HeadCell rowSpan={2}>
            Нештатные
            <br />
            ситуации
          </HeadCell>
        </tr>
        <tr>
          {groups.flatMap(([, cols]) => cols.map((c) => <HeadCell key={c}>{c}</HeadCell>))}
        </tr>
      </thead>
      <tbody>
        {rows.map((row) => {
          const selected = row.day === 1;
          return (
            <Row key={row.day} $kind={row.kind} $selected={selected}>
              <DateCell $selected={selected} $marked={markedDays.includes(row.day)}>
                <DateCellInner>
                  <Expander aria-label={`Развернуть ${row.date}`} />
                  {row.date}
                </DateCellInner>
              </DateCell>
              {row.values.map((v, i) => (
                <Cell key={i} $selected={selected} $warn={selected && i === 16}>
                  {v}
                </Cell>
              ))}
              <Cell $selected={selected} />
            </Row>
          );
        })}
      </tbody>
    </DataTable>
  );
}

function App() {
  return (
    <Window>
      <GlobalStyle />
      <TitleBar>
        <LersIcon size={15} />
        <Title>ЛЭРС УЧЕТ версия 3.07 R19.09</Title>
        <ResizeButton aria-label="Изменить ширину">
          <Svg w={21} h={11}>
            <path d="M1 5.500L6 1V4H15V1L20 5.500L15 10V7H6V10Z" fill="#fff" stroke="#555b75" strokeWidth="0.700" />
          </Svg>
        </ResizeButton>
        <CaptionButtons>
          <CaptionButton aria-label="Свернуть">
            <Svg size={9}>
              <rect x="1" y="7" width="5" height="2" fill="#fff" />
            </Svg>
          </CaptionButton>
          <CaptionButton aria-label="Восстановить">
            <Svg size={9}>
              <path d="M3 2.500V1H8.500V5.500H7M0.500 4H6V8.500H0.500Z" fill="none" stroke="#fff" strokeWidth="1.300" />
            </Svg>
          </CaptionButton>
          <CaptionButton $red aria-label="Закрыть">
            <Cross size={8} />
          </CaptionButton>
        </CaptionButtons>
      </TitleBar>
      <MenuBar>
        {menu.map((m) => (
          <MenuItem key={m}>{m}</MenuItem>
        ))}
      </MenuBar>
      <MainToolbar>
        <BigButton $width={90}>
          <HouseIcon />
          Объекты учета
        </BigButton>
        <BigButton $width={77}>
          <TapIcon />
          Точки учета
        </BigButton>
        <BigButton $width={117}>
          <HelmetIcon />
          Работы на объектах
        </BigButton>
        <Separator />
        <BigButton $width={126}>
          <WarningIcon />
          Нештатные ситуации
        </BigButton>
        <Separator />
        <BigButton $width={83}>
          <MapIcon />
          Мнемосхемы
        </BigButton>
        <BigButton $width={98}>
          <SummaryIcon />
          Сводка текущих
        </BigButton>
        <Spacer />
        <BellButton aria-label="Уведомления">
          <BellIcon />
          <Badge>200</Badge>
        </BellButton>
      </MainToolbar>
      <TabStrip>
        <Tab $width={96}>Объекты учета</Tab>
        <Tab $width={79}>Точки учета</Tab>
        <Tab $width={82}>Ручной опрос</Tab>
        <ActiveTab>
          <ActiveTabLabel>Таблица 50 лет Октября, 7 - отопление</ActiveTabLabel>
          <CloseTab aria-label="Закрыть вкладку">
            <Cross size={8} />
          </CloseTab>
        </ActiveTab>
        <Spacer />
        <StripClose aria-label="Закрыть страницу">
          <Cross color="#2b6cb0" />
        </StripClose>
      </TabStrip>
      <PageFrame>
        <ToolRow>
          <ToolButton $width={18} aria-label="Сохранить">
            <SaveIcon />
          </ToolButton>
          <ToolButton $width={34} aria-label="Печать">
            <PrinterIcon />
          </ToolButton>
          <ToolSeparator $left={1} $right={7} />
          <Spinner aria-label="Знаков после запятой">
            <SpinnerInput defaultValue="2" />
            <GlassButton $w={14} $h={16} aria-label="Изменить значение">
              <Svg w={7} h={10}>
                <path d="M1 4L3.500 1.500L6 4M1 6L3.500 8.500L6 6" fill="none" stroke="#1d5f9f" />
              </Svg>
            </GlassButton>
          </Spinner>
          <ToolSeparator $left={7} />
          <ToolButton $on $width={92}>
            <ListIcon />
            Параметры
          </ToolButton>
          <ToolSeparator />
          <ToolButton $width={24} aria-label="Обновить">
            <RefreshIcon />
          </ToolButton>
          <ToolSeparator />
          <ToolButton $width={24} aria-label="Объект">
            <HouseIcon size={16} />
          </ToolButton>
          <ToolButton $width={26} aria-label="График">
            <ChartIcon />
          </ToolButton>
          <ToolSeparator />
          <ToolButton $width={24} aria-label="Баланс">
            <WeightIcon />
          </ToolButton>
          <ToolSeparator />
          <ToolButton $width={24} aria-label="Правка">
            <EditIcon />
          </ToolButton>
          <ToolButton $width={26} aria-label="Расчёт">
            <CalcIcon />
          </ToolButton>
          <ToolSeparator />
          <ToolButton $on $width={24} aria-label="Зелёная метка">
            <Square fill="#35a52a" edge="#1c6d15" />
          </ToolButton>
          <ToolButton $width={26} aria-label="Красная метка">
            <Square fill="#e3401f" edge="#a32a10" />
          </ToolButton>
        </ToolRow>
        <Workspace>
          <Parameters />
          <MainPanel>
            <PanelCaption>
              <ThermoIcon />
              50 лет Октября, 7 - отопление
            </PanelCaption>
            <GridBox>
              <ReadingsTable />
              <HeaderFiller />
              <Tooltip role="tooltip">Значение рассчитано</Tooltip>
            </GridBox>
          </MainPanel>
        </Workspace>
        <StatusBar>
          <StatusText>50 лет Октября, 7 - отопление</StatusText>
          <StatusDivider />
          <StatusText>ИМ2300 (сер К-Z) #LE016</StatusText>
          <StatusDivider />
          <StatusText>РД=1, РЧ=0</StatusText>
          <StatusDivider />
          <StatusText>Суточные, Часовые с 01.11.2016 по 30.11.2016</StatusText>
        </StatusBar>
      </PageFrame>
      <WindowStatus>
        <WindowMenu>
          Таблица 50 лет Октября, 7 - отопление
          <Svg w={5} h={4}>
            <path d="M0 0H5L2.500 3Z" fill="#000" />
          </Svg>
        </WindowMenu>
        <Spacer />
        <StatusDivider />
        <StatusText>
          <Svg w={15} h={10}>
            <path d="M0 2L3 0H11L15 4V9L5 9L0 5Z" fill="#55585c" />
            <path d="M5 4H15V9H5Z" fill="#36383b" />
            <rect x="7" y="6" width="2" height="2" fill="#4cc04a" />
            <rect x="11" y="6" width="2" height="2" fill="#e0402f" />
          </Svg>
          Служб опроса: 2; портов: 3, действует: 3, свободно: 1
        </StatusText>
        <StatusDivider />
        <StatusText>Подключены к '192.168.1.203:10000' в 14:40 (30 ноя)</StatusText>
      </WindowStatus>
      <Taskbar>
        <StartButton aria-label="Пуск">
          <StartOrb />
        </StartButton>
        <TaskButton aria-label="Проводник">
          <ExplorerIcon />
        </TaskButton>
        <TaskButton aria-label="Acrobat">
          <AcrobatIcon />
        </TaskButton>
        <TaskButton $open $stacked aria-label="Excel">
          <OfficeIcon color="#1e7145" letter="X">
            <rect x="17" y="4" width="13" height="23" fill="#fff" stroke="#1e7145" />
            <path d="M19 8H28M19 12H28M19 16H28M19 20H28M19 24H28" stroke="#1e7145" strokeWidth="2" strokeDasharray="4 1" />
          </OfficeIcon>
        </TaskButton>
        <TaskButton aria-label="Word">
          <OfficeIcon color="#2a5699" letter="W">
            <rect x="17" y="4" width="13" height="23" fill="#fff" stroke="#2a5699" />
            <path d="M18 8H27M18 11H27M18 14H27M18 17H27M18 20H27M18 23H27" stroke="#2a5699" />
          </OfficeIcon>
        </TaskButton>
        <TaskButton $open aria-label="Outlook">
          <OfficeIcon color="#0072c6" letter="O">
            <rect x="14" y="8" width="16" height="15" fill="#fff" stroke="#0072c6" />
            <path d="M18 10L22 17L30 9" fill="none" stroke="#0072c6" strokeWidth="2" />
          </OfficeIcon>
        </TaskButton>
        <TaskButton $open $active aria-label="ЛЭРС УЧЕТ">
          <LersIcon size={30} />
        </TaskButton>
        <TaskButton aria-label="Chrome">
          <ChromeIcon />
        </TaskButton>
        <TaskButton $open aria-label="Chrome, окно">
          <ChromeIcon />
        </TaskButton>
        <TaskButton $open aria-label="Paint">
          <PaintIcon />
        </TaskButton>
        <Spacer />
        <Tray>
          <Language>RU</Language>
          <TrayIcons>
            <Svg w={14} h={5}>
              <path d="M0 5L4 0L8 5Z" fill="#fff" />
            </Svg>
            <Svg size={16}>
              <path d="M1.500 1V16" stroke="#fff" strokeWidth="1.500" />
              <path d="M3 2H8L9 4H14V9H8L7 8H3Z" fill="#fff" />
              <circle cx="11" cy="11" r="4.500" fill="#d9302a" />
              <path d="M9 9L13 13M13 9L9 13" stroke="#fff" strokeWidth="1.500" />
            </Svg>
            <Svg size={16}>
              <rect x="5" y="4" width="10" height="8" fill="#71859c" stroke="#fff" strokeWidth="1.500" />
              <path d="M10 12V15M6 15H14M1 1V5H5V1M3 5V14H6" fill="none" stroke="#fff" strokeWidth="1.300" />
            </Svg>
            <Svg size={16}>
              <path d="M1 5H4L8 1V15L4 11H1Z" fill="#fff" />
              <path d="M10 6C11 7 11 9 10 10M12 4C14 6 14 10 12 12" fill="none" stroke="#fff" />
            </Svg>
          </TrayIcons>
          <Clock>
            15:11
            <br />
            30.11.2016
          </Clock>
          <ShowDesktop aria-label="Показать рабочий стол" />
        </Tray>
      </Taskbar>
    </Window>
  );
}

export default App;
